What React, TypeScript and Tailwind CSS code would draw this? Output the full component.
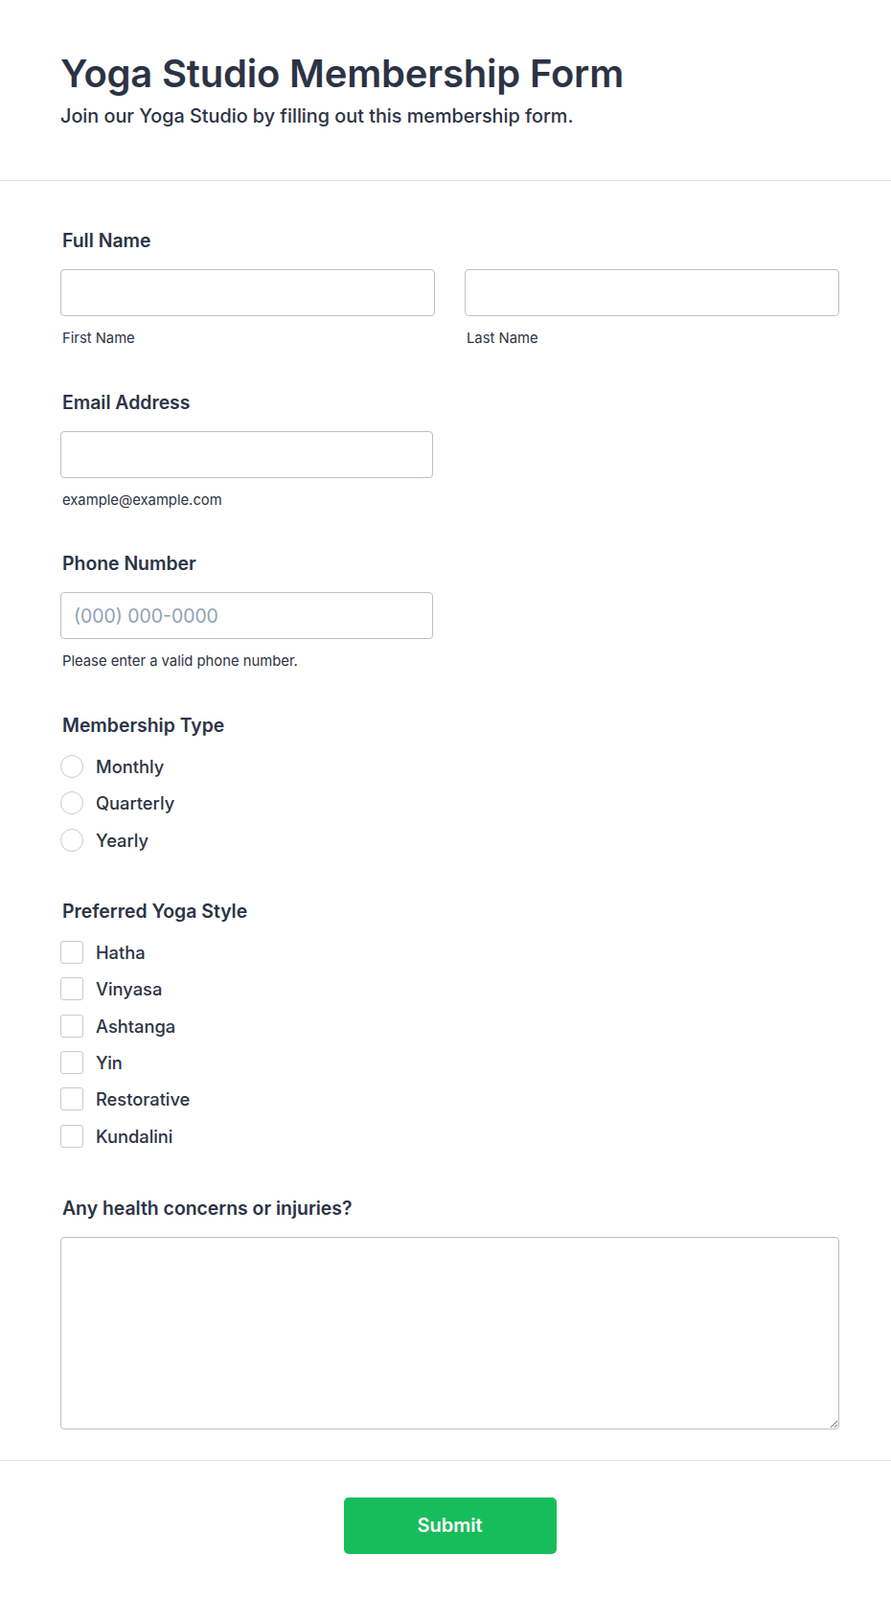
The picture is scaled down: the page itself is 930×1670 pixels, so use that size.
import React from 'react';

const font = { fontFamily: 'Inter, "Noto Sans", sans-serif' };

function Label({ children }: { children: React.ReactNode }) {
  return <div className="pl-[2px] text-[19.4px] leading-[28px] font-semibold text-[#2c3345] mb-4">{children}</div>;
}

function SubLabel({ children }: { children: React.ReactNode }) {
  return <div className="mt-[13px] pl-[2px] text-[14.8px] leading-[20px] text-[#2c3345]">{children}</div>;
}

function TextBox({ placeholder, wide }: { placeholder?: string; wide?: boolean }) {
  return (
    <input
      type="text"
      placeholder={placeholder}
      className={`h-[49px] ${wide ? 'w-full' : 'w-[389px]'} rounded-[4px] border border-[#b9c0cd] bg-white px-[13px] text-[19.4px] text-[#2c3345] placeholder:text-[#93a0b6] outline-none`}
    />
  );
}

export default function App() {
  const memberships = ['Monthly', 'Quarterly', 'Yearly'];
  const styles = ['Hatha', 'Vinyasa', 'Ashtanga', 'Yin', 'Restorative', 'Kundalini'];

  return (
    <div className="w-[930px] min-h-[1670px] bg-white text-[#2c3345]" style={font}>
      {/* Header */}
      <div className="pl-[63px] pr-[54px] pt-[52px] pb-[53px] border-b border-[#d9dee6]">
        <h1 className="text-[40px] leading-[50px] font-semibold tracking-[-0.2px]">Yoga Studio Membership Form</h1>
        <p className="mt-[5px] text-[19.8px] leading-[28px] font-medium">
          Join our Yoga Studio by filling out this membership form.
        </p>
      </div>

      {/* Fields */}
      <div className="pl-[63px] pr-[54px] pt-[48px] pb-[32px] border-b border-[#e6e8ef]">
        <div>
          <Label>Full Name</Label>
          <div className="grid grid-cols-2 gap-[31px]">
            <div>
              <TextBox wide />
              <SubLabel>First Name</SubLabel>
            </div>
            <div>
              <TextBox wide />
              <SubLabel>Last Name</SubLabel>
            </div>
          </div>
        </div>

        <div className="mt-[43px]">
          <Label>Email Address</Label>
          <TextBox />
          <SubLabel>example@example.com</SubLabel>
        </div>

        <div className="mt-[42px]">
          <Label>Phone Number</Label>
          <TextBox placeholder="(000) 000-0000" />
          <SubLabel>Please enter a valid phone number.</SubLabel>
        </div>

        <div className="mt-[43px]">
          <div className="pl-[2px] text-[19.4px] leading-[28px] font-semibold">Membership Type</div>
          <div className="mt-[10px] flex flex-col">
            {memberships.map((m) => (
              <label key={m} className="flex h-[38.3px] items-center gap-[13px] cursor-pointer">
                <span className="h-[24px] w-[24px] shrink-0 rounded-full border border-[#c5cbd5] bg-white" />
                <span className="text-[18.3px] leading-[24px] font-medium">{m}</span>
              </label>
            ))}
          </div>
        </div>

        <div className="mt-[41px]">
          <div className="pl-[2px] text-[19.4px] leading-[28px] font-semibold">Preferred Yoga Style</div>
          <div className="mt-[10px] flex flex-col">
            {styles.map((s) => (
              <label key={s} className="flex h-[38.3px] items-center gap-[13px] cursor-pointer">
                <span className="h-[24px] w-[24px] shrink-0 rounded-[3px] border border-[#c5cbd5] bg-white" />
                <span className="text-[18.3px] leading-[24px] font-medium">{s}</span>
              </label>
            ))}
          </div>
        </div>

        <div className="mt-[42px]">
          <Label>Any health concerns or injuries?</Label>
          <textarea className="block h-[201px] w-full rounded-[4px] border border-[#b9c0cd] bg-white px-[13px] py-[10px] text-[18px] outline-none" />
        </div>
      </div>

      {/* Submit */}
      <div className="pl-[63px] pr-[54px] pt-[38px] pb-[49px] flex justify-center">
        <button className="h-[59px] w-[222px] rounded-[5px] bg-[#18bd5b] text-[20px] font-semibold text-white">
          Submit
        </button>
      </div>
    </div>
  );
}
